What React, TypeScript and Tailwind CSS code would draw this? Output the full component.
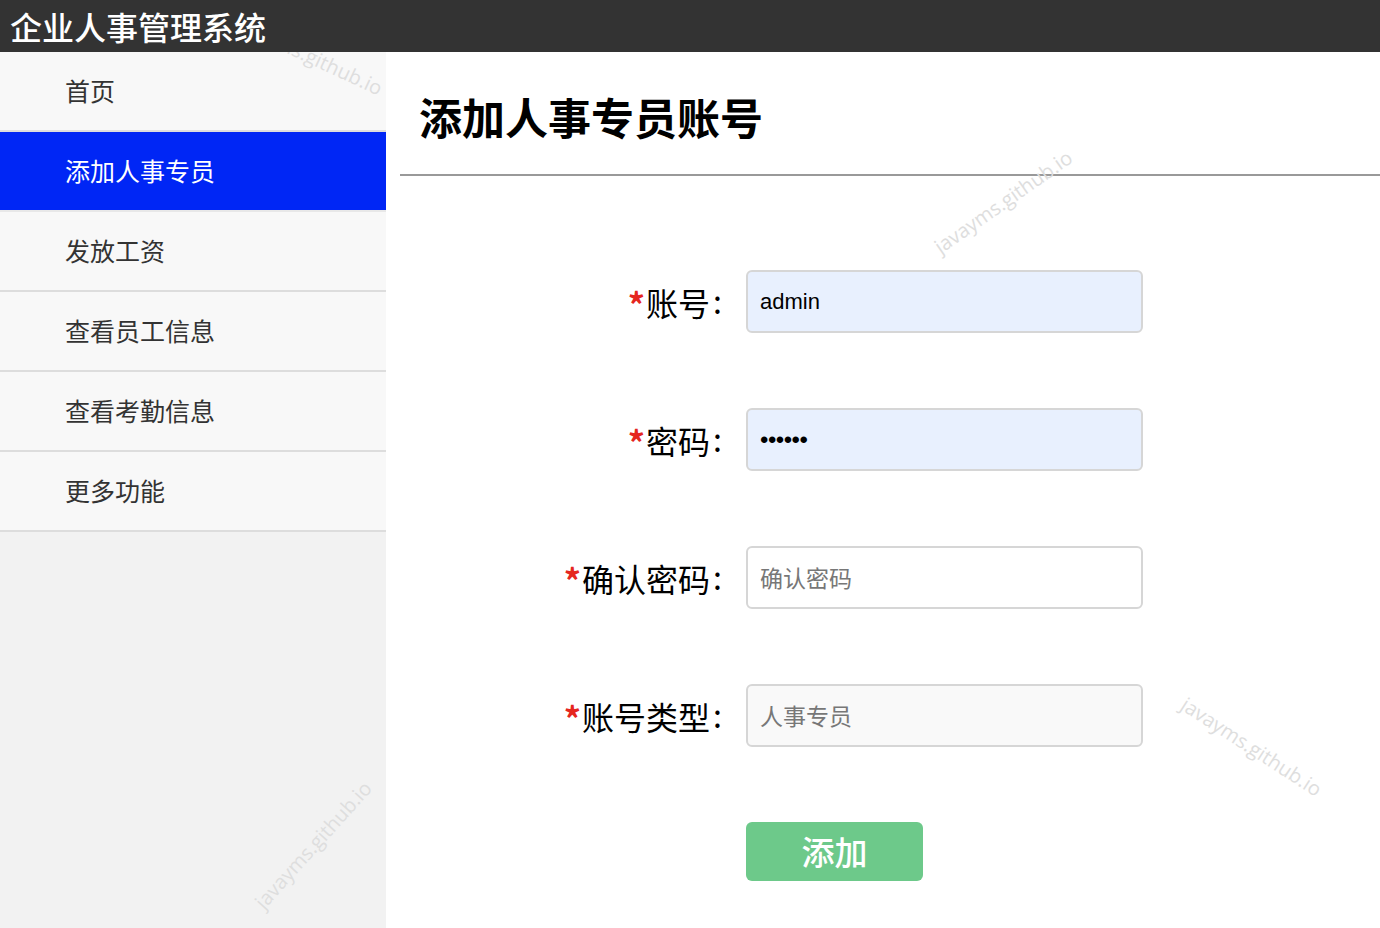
import React from "react";

const font = { fontFamily: '"Noto Sans CJK SC", "Noto Sans", sans-serif' } as const;

function Watermark({ className }: { className: string }) {
  return (
    <div
      className={`pointer-events-none absolute text-[20px] text-[#dedede] whitespace-nowrap select-none ${className}`}
      style={{ fontFamily: '"Open Sans", "Noto Sans", sans-serif' }}
    >
      javayms.github.io
    </div>
  );
}

const menu = ["首页", "添加人事专员", "发放工资", "查看员工信息", "查看考勤信息", "更多功能"];

function Row({
  label,
  children,
}: {
  label: string;
  children: React.ReactNode;
}) {
  return (
    <div className="flex items-center h-[63px]">
      <div className="w-[346px] flex justify-end items-center pr-[24px] text-[32px] text-black leading-none">
        <span className="text-[#e5261f] text-[34px] font-bold mt-[4px] mr-[1px]">*</span>
        <span>{label}</span>
        <span className="ml-[3px] mb-[3px]">:</span>
      </div>
      {children}
    </div>
  );
}

export default function App() {
  return (
    <div className="relative w-[1380px] h-[928px] overflow-hidden bg-white flex flex-col" style={font}>
      <Watermark className="left-[226px] top-[40px] rotate-[25deg] z-0" />
      <header className="relative z-10 h-[52px] bg-[#333333] flex items-center pl-[10px] shrink-0">
        <span className="text-white text-[32px] leading-none font-medium">企业人事管理系统</span>
      </header>
      <div className="flex flex-1">
        <aside className="w-[386px] bg-[#f2f2f2] flex flex-col">
          {menu.map((m, i) => (
            <div
              key={m}
              className={`h-[80px] flex items-center pl-[65px] text-[25px] border-b-2 ${
                i === 1
                  ? "bg-[#0026f5] text-white border-[#e8e8e8]"
                  : "bg-[#f8f8f8] text-[#333] border-[#dddddd]"
              }`}
            >
              {m}
            </div>
          ))}
        </aside>
        <main className="flex-1 pl-[14px] flex flex-col">
          <div className="h-[124px] border-b-2 border-[#999999] flex items-center pl-[19px]">
            <h1 className="text-[43px] font-bold text-black leading-none mt-[6px]">添加人事专员账号</h1>
          </div>
          <div className="flex flex-col gap-[75px] pt-[94px]">
            <Row label="账号">
              <div className="w-[397px] h-[63px] rounded-[6px] border-2 border-[#d6d6d6] bg-[#e8f0fe] flex items-center px-[12px] text-[22px] text-black" style={{ fontFamily: '"Liberation Sans", Arial, sans-serif' }}>
                admin
              </div>
            </Row>
            <Row label="密码">
              <div className="w-[397px] h-[63px] rounded-[6px] border-2 border-[#d6d6d6] bg-[#e8f0fe] flex items-center px-[12px] text-[24px] text-black tracking-[-0.5px]" style={{ fontFamily: '"Liberation Sans", Arial, sans-serif' }}>
                ••••••
              </div>
            </Row>
            <Row label="确认密码">
              <div className="w-[397px] h-[63px] rounded-[6px] border-2 border-[#d6d6d6] bg-white flex items-center px-[12px] text-[23px] text-[#777]">
                确认密码
              </div>
            </Row>
            <Row label="账号类型">
              <div className="w-[397px] h-[63px] rounded-[6px] border-2 border-[#d6d6d6] bg-[#f9f9f9] flex items-center px-[12px] text-[23px] text-[#777]">
                人事专员
              </div>
            </Row>
            <div className="pl-[346px]">
              <div className="w-[177px] h-[59px] rounded-[6px] bg-[#6dc98a] flex items-center justify-center text-white text-[33px] leading-none font-medium">
                添加
              </div>
            </div>
          </div>
        </main>
      </div>
      <Watermark className="left-[922px] top-[187px] -rotate-[35deg]" />
      <Watermark className="left-[232px] top-[830px] -rotate-[48deg]" />
      <Watermark className="left-[1170px] top-[732px] rotate-[33deg]" />
    </div>
  );
}
